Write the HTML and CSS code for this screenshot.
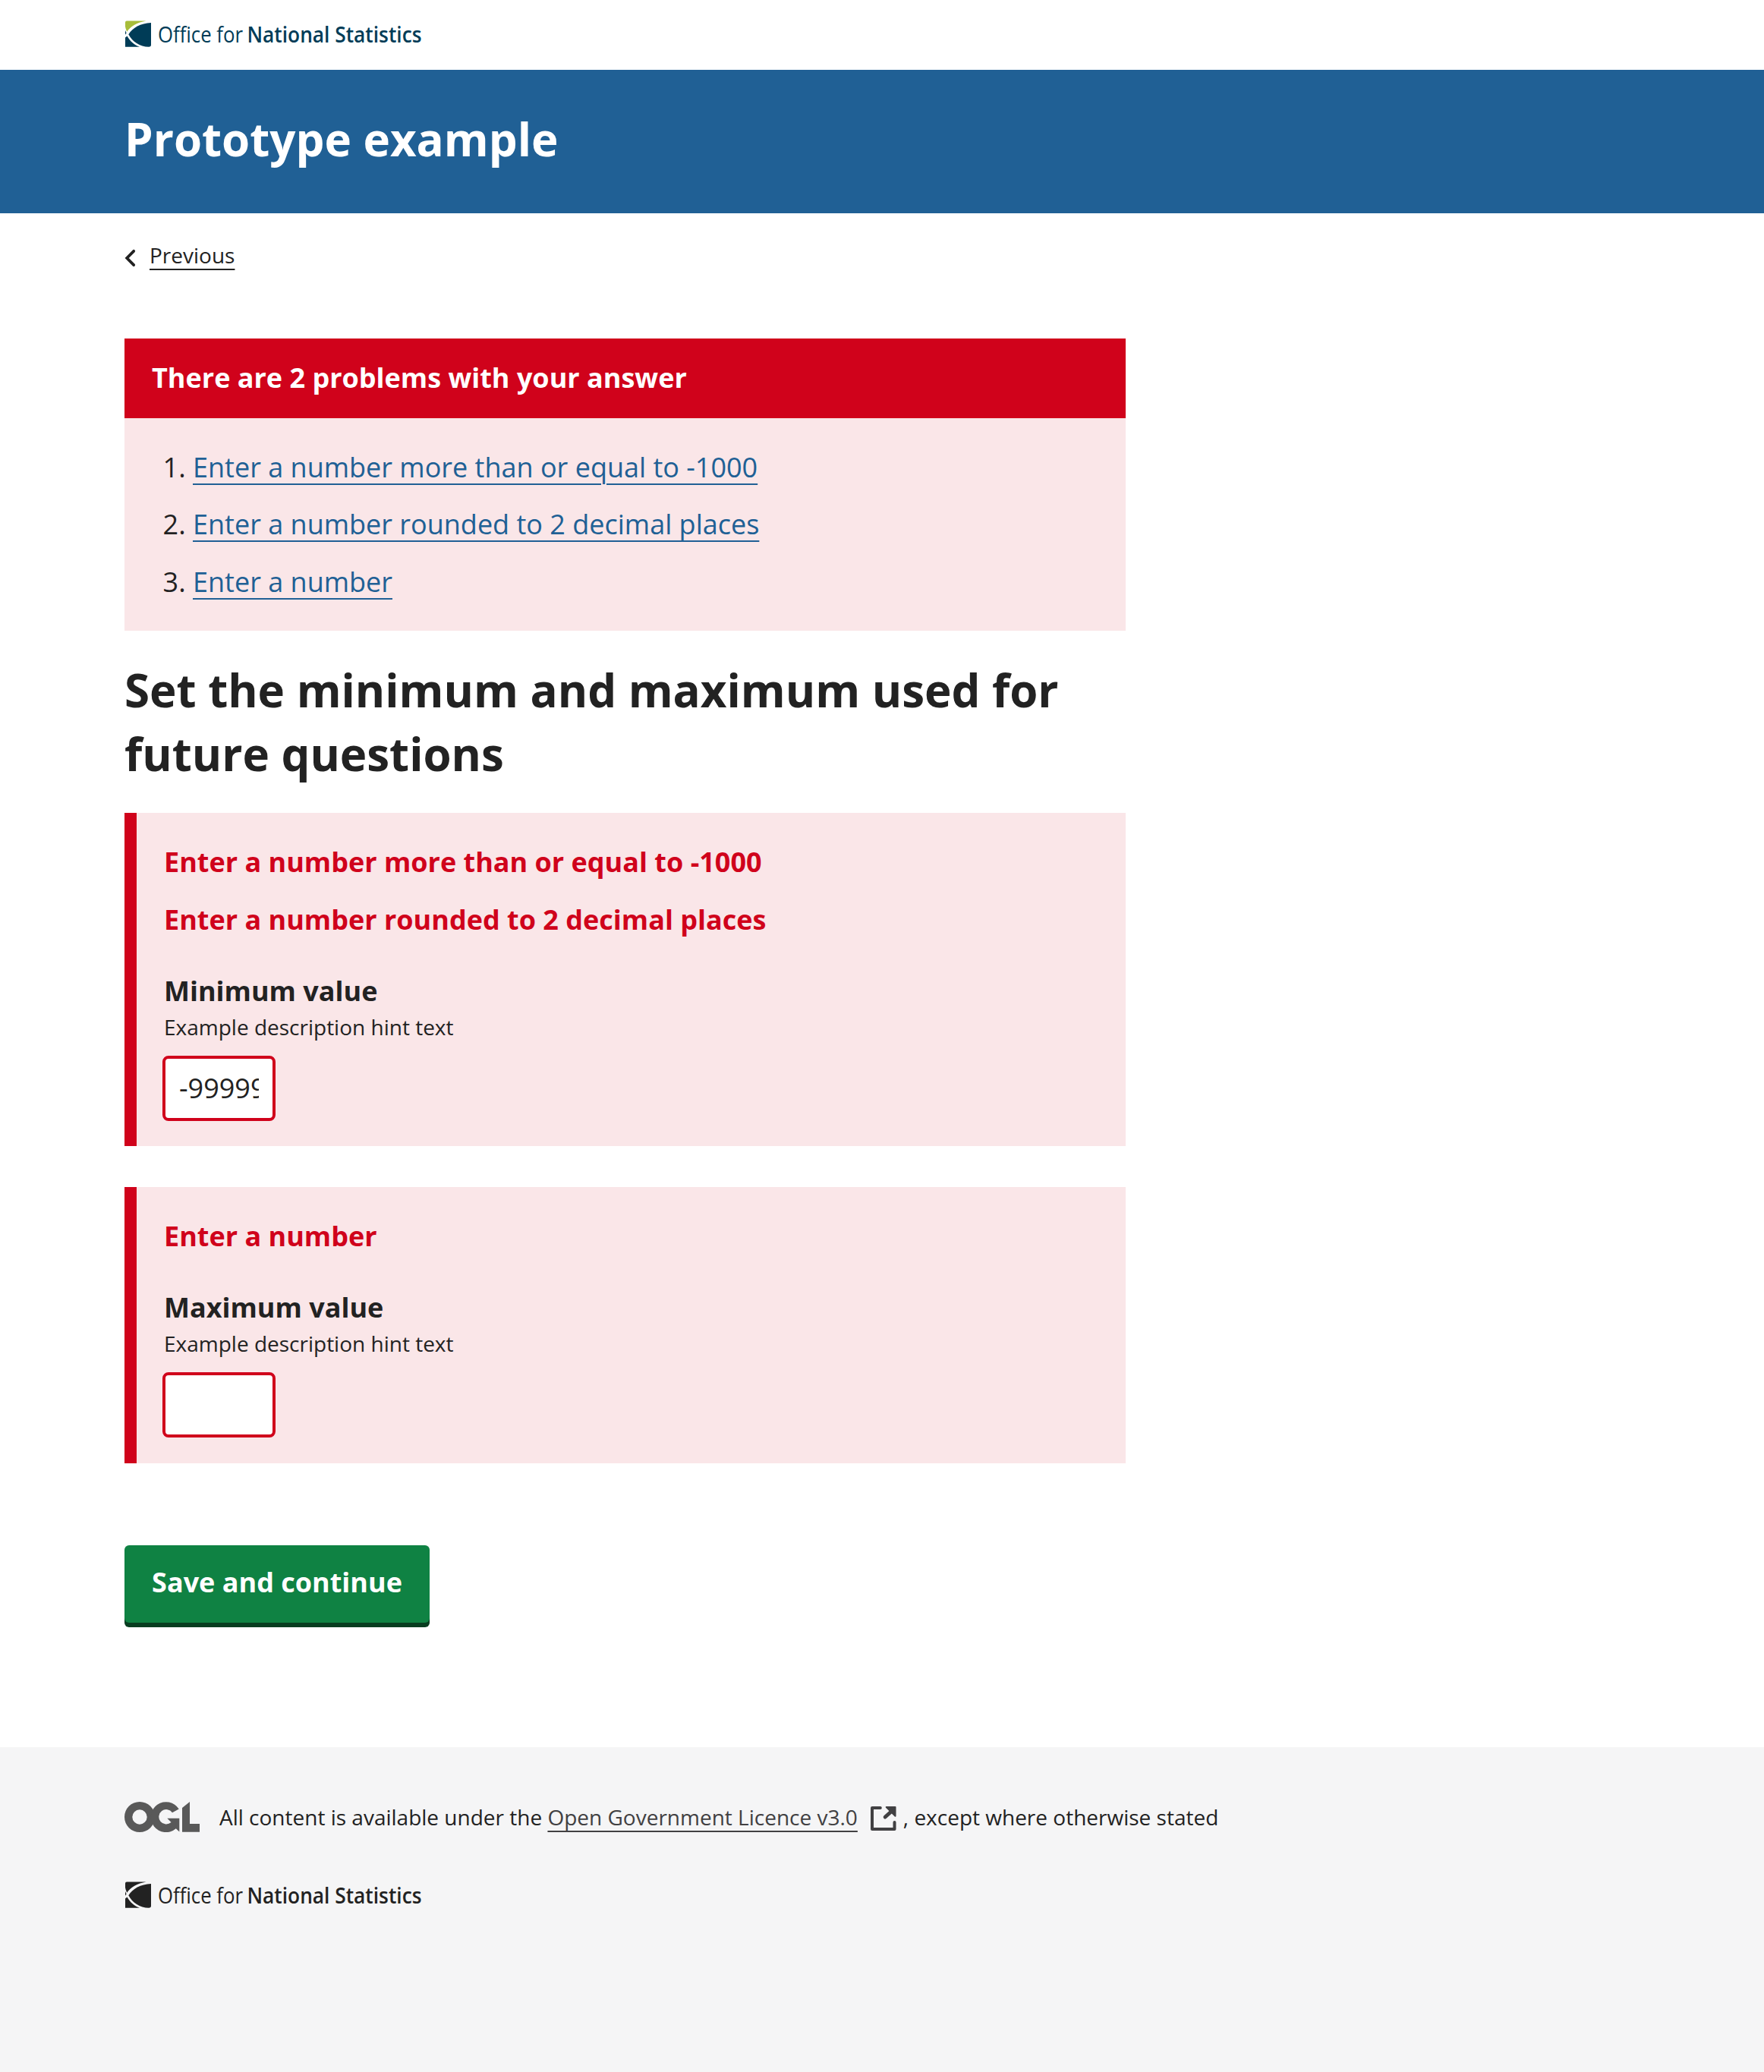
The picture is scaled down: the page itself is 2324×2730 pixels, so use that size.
FILE: index.html
```html
<!DOCTYPE html>
<html lang="en">
<head>
  <meta charset="utf-8">
  <title>Prototype example</title>
  <link rel="stylesheet" href="styles.css">
</head>
<body>
  <header>
    <div class="masthead container">
      <svg class="logo" width="392" height="40" viewBox="0 0 392 40" role="img" aria-label="Office for National Statistics">
        <path class="logo-accent" d="M1 2.5Q1 .5 3 .5H28.5C17 2.5 7.500 8 3.300 14.800Q1.500 11.500 1 8Z"/>
        <path class="logo-mark" d="M5.300 18.200C11 9.500 21 3.700 35 3V32Q35 34.800 32 34.800C20 34.300 10.500 28 5.300 18.200Z"/>
        <path class="logo-mark" d="M1 22.500L3.500 20.500C7.500 27.500 13 32.300 20 34.800H1ZM1 13L2.600 16.500L1 18.800Z"/>
        <text class="logo-text logo-light" x="44" y="28.500" textLength="112" lengthAdjust="spacingAndGlyphs">Office for</text>
        <text class="logo-text logo-bold" x="161.500" y="28.500" textLength="230" lengthAdjust="spacingAndGlyphs">National Statistics</text>
      </svg>
    </div>
    <div class="title-bar">
      <div class="container"><p class="title">Prototype example</p></div>
    </div>
  </header>

  <div class="page container">
    <nav class="breadcrumb">
      <svg width="15" height="24" viewBox="0 0 15 24" aria-hidden="true"><path d="M12.200 2.800L3.200 12L12.200 21.200" fill="none" stroke="currentColor" stroke-width="3.800" stroke-linecap="round"/></svg>
      <a class="link" href="#">Previous</a>
    </nav>

    <main class="main">
      <section class="summary">
        <h2 class="summary-title">There are 2 problems with your answer</h2>
        <ol class="summary-list">
          <li><a class="link" href="#minimum">Enter a number more than or equal to -1000</a></li>
          <li><a class="link" href="#minimum">Enter a number rounded to 2 decimal places</a></li>
          <li><a class="link" href="#maximum">Enter a number</a></li>
        </ol>
      </section>

      <h1 class="question">Set the minimum and maximum used for future questions</h1>

      <form>
        <div class="error-panel">
          <p class="error">Enter a number more than or equal to -1000</p>
          <p class="error">Enter a number rounded to 2 decimal places</p>
          <label class="label" for="minimum">Minimum value</label>
          <span class="hint">Example description hint text</span>
          <input class="input" id="minimum" type="text" value="-99999">
        </div>
        <div class="error-panel">
          <p class="error">Enter a number</p>
          <label class="label" for="maximum">Maximum value</label>
          <span class="hint">Example description hint text</span>
          <input class="input" id="maximum" type="text">
        </div>
        <button class="button" type="button">Save and continue</button>
      </form>
    </main>
  </div>

  <footer class="footer">
    <div class="container">
      <div class="licence">
        <svg class="ogl" width="99" height="40" viewBox="0 0 99 40" role="img" aria-label="OGL">
          <path fill-rule="evenodd" d="M20 0A20 20 0 1 0 20 40A20 20 0 1 0 20 0ZM20 10.300A9.700 9.700 0 1 1 20 29.700A9.700 9.700 0 1 1 20 10.300Z"/>
          <path d="M71.700 9.500A20 20 0 1 0 67.800 35.300L72.300 39.500V21.700H56.300L61.500 27A9.700 9.700 0 1 1 63 14.300Z"/>
          <path d="M76 8L86 0V29H99V39.700H76Z"/>
        </svg>
        <p class="licence-text">All content is available under the <a class="link" href="#">Open Government Licence v3.0</a><svg class="external" width="34" height="32" viewBox="0 0 34 32" aria-hidden="true"><path d="M12.800 2H2V30H31.500V21" fill="none" stroke="currentColor" stroke-width="4" stroke-linecap="round" stroke-linejoin="round"/><path d="M20.700 1H32.500V12.800Z" fill="currentColor" stroke="currentColor" stroke-width="2" stroke-linejoin="round"/><path d="M27 7L19.200 14" stroke="currentColor" stroke-width="5" stroke-linecap="round"/></svg>, except where otherwise stated</p>
      </div>
      <svg class="logo logo-mono" width="392" height="40" viewBox="0 0 392 40" role="img" aria-label="Office for National Statistics">
        <path class="logo-accent" d="M1 2.5Q1 .5 3 .5H28.5C17 2.5 7.500 8 3.300 14.800Q1.500 11.500 1 8Z"/>
        <path class="logo-mark" d="M5.300 18.200C11 9.500 21 3.700 35 3V32Q35 34.800 32 34.800C20 34.300 10.500 28 5.300 18.200Z"/>
        <path class="logo-mark" d="M1 22.500L3.500 20.500C7.500 27.500 13 32.300 20 34.800H1ZM1 13L2.600 16.500L1 18.800Z"/>
        <text class="logo-text logo-light" x="44" y="28.500" textLength="112" lengthAdjust="spacingAndGlyphs">Office for</text>
        <text class="logo-text logo-bold" x="161.500" y="28.500" textLength="230" lengthAdjust="spacingAndGlyphs">National Statistics</text>
      </svg>
    </div>
  </footer>
</body>
</html>
```
FILE: styles.css
```css
* { box-sizing: border-box; }

body {
  margin: 0;
  min-height: 2730px;
  display: flex;
  flex-direction: column;
  background: #fff;
  color: #222;
  font: 36px/50px "Open Sans", sans-serif;
}

h1, h2, p, ol { margin: 0; }

.container { padding: 0 164px; }

.link {
  color: inherit;
  text-decoration: underline;
  text-decoration-thickness: 2px;
  text-underline-offset: 8px;
}

/* Header */
.masthead { height: 92px; padding-top: 27px; }
.logo { display: block; overflow: visible; fill: #003c57; }
.logo-accent { fill: #a8bd3a; }
.logo-mono { fill: #222; }
.logo-mono .logo-accent { fill: #222; }
.logo-text { font-size: 29px; }
.logo-light { font-weight: 400; }
.logo-bold { font-weight: 600; }

.title-bar { height: 189px; padding-top: 49px; background: #206095; }
.title { color: #fff; font-size: 60px; font-weight: 700; line-height: 84px; }

/* Page */
.breadcrumb {
  display: flex;
  align-items: center;
  gap: 18px;
  height: 40px;
  margin-top: 35px;
  font-size: 28px;
  line-height: 40px;
}
.breadcrumb svg { margin-top: 8px; }
.breadcrumb .link { text-underline-offset: 7px; }

.main { width: 1319px; margin-top: 90px; }

.summary { background: #fae6e8; }
.summary-title {
  height: 105px;
  padding: 27px 36px 0;
  background: #d0021b;
  color: #fff;
  font-size: 36px;
  line-height: 50px;
}
.summary-list {
  display: flex;
  flex-direction: column;
  gap: 25.4px;
  height: 280px;
  padding: 40px 36px 0 90px;
}
.summary-list .link { color: #206095; }

.question { margin: 36px 0 36px; font-size: 60px; line-height: 84px; }

.error-panel {
  display: flex;
  flex-direction: column;
  align-items: flex-start;
  margin-bottom: 54px;
  padding: 40px 36px 33.4px;
  border-left: 16px solid #d0021b;
  background: #fae6e8;
}
.error { margin-bottom: 26px; color: #d0021b; font-weight: 700; }
.label { margin-top: 18px; font-weight: 700; }
.hint { margin-top: 2px; font-size: 28px; line-height: 40px; }
.input {
  width: 149px;
  height: 86px;
  margin: 18px 0 0 -2px;
  padding: 0 18px 2px;
  border: 4px solid #d0021b;
  border-radius: 8px;
  background: #fff;
  color: #222;
  font: 36px/50px "Open Sans", sans-serif;
}

.button {
  display: block;
  width: 402px;
  height: 102px;
  margin-top: 108px;
  padding: 0 0 4px;
  border: 0;
  border-radius: 6px;
  background: #0f8243;
  box-shadow: 0 6px 0 #073d20;
  color: #fff;
  font: 700 36px/50px "Open Sans", sans-serif;
}

/* Footer */
.footer { flex: 1; margin-top: 164px; padding-top: 72.2px; background: #f5f5f6; }
.licence { display: flex; align-items: flex-start; gap: 26px; height: 105px; }
.ogl { fill: #595959; }
.licence-text { font-size: 28px; line-height: 40px; }
.licence-text .link { color: #414042; text-underline-offset: 7px; }
.external { margin: 0 8.5px 0 17.500px; color: #414042; vertical-align: -7px; }
```
